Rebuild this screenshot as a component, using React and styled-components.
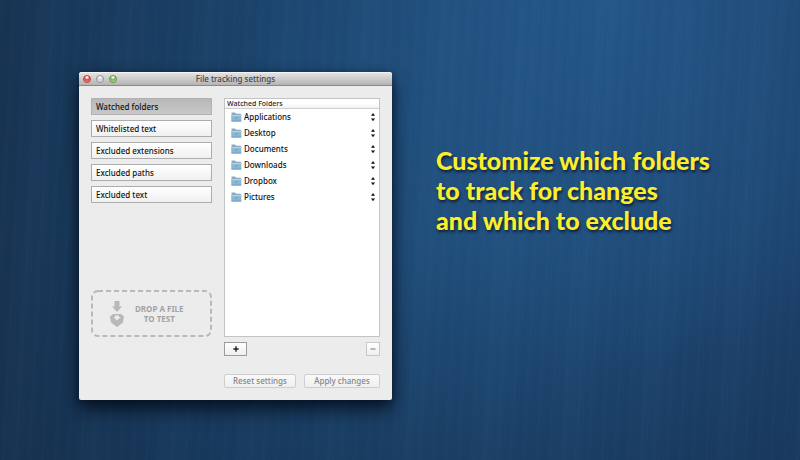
import React, { useState } from "react";
import styled, { createGlobalStyle } from "styled-components";

const GlobalStyle = createGlobalStyle`
  *, *::before, *::after { box-sizing: border-box; }
  body { margin: 0; background: #1b4169; }
  body, button, input { font-family: "Noto Sans", "Open Sans", sans-serif; }
`;

const Stage = styled.main`
  min-height: 100vh;
  padding: 72px 79px 60px;
  display: grid;
  grid-template-columns: 313fr 285fr;
  column-gap: 44px;
  align-items: start;
  background:
    repeating-linear-gradient(93deg, rgba(120, 170, 230, 0.015) 0 2px, transparent 3px 7px, rgba(0, 10, 40, 0.025) 8px 9px, transparent 10px 13px),
    repeating-linear-gradient(95deg, transparent 0 31px, rgba(110, 170, 220, 0.025) 50px, transparent 79px),
    radial-gradient(ellipse 50% 80% at 76% 0%, rgba(40, 96, 150, 0.65), transparent),
    radial-gradient(ellipse 45% 60% at 62% 50%, rgba(34, 84, 130, 0.5), transparent),
    linear-gradient(transparent 50%, rgba(18, 40, 66, 0.3)),
    linear-gradient(90deg, #183453 0%, #1a4066 25%, #1d4670 60%, #1c406a 100%);

  @media (max-width: 640px) {
    grid-template-columns: 1fr;
    row-gap: 40px;
    padding: 32px 24px;
  }
`;

const Window = styled.section`
  border-radius: 3px 3px 2px 2px;
  background: #ececec;
  box-shadow: 0 10px 18px rgba(0, 8, 20, 0.7), 0 2px 8px rgba(0, 8, 20, 0.4);
`;

const TitleBar = styled.header`
  height: 14px;
  padding: 0 4px;
  display: grid;
  grid-template-columns: 1fr auto 1fr;
  align-items: center;
  border-radius: 3px 3px 0 0;
  border-bottom: 1px solid #8a8a8a;
  background: linear-gradient(#e6e6e6, #b4b4b4);
  box-shadow: inset 0 1px 0 #f4f4f4;
`;

const Title = styled.h1`
  margin: 0;
  font-size: 8px;
  line-height: 12px;
  font-weight: 500;
  color: #444;
`;

const Lights = styled.div`
  display: flex;
  gap: 5px;
`;

const Light = styled.button`
  width: 8px;
  height: 8px;
  padding: 0;
  border: 1px solid ${(p) => p.$rim};
  border-radius: 50%;
  background: radial-gradient(circle at 50% 20%, #fff 0 10%, ${(p) => p.$fill} 45%, ${(p) => p.$glow});
`;

const Body = styled.div`
  padding: 12px;
  display: grid;
  grid-template-columns: 121fr 156fr;
  column-gap: 12px;
`;

const Sidebar = styled.div`
  display: flex;
  flex-direction: column;
  justify-content: space-between;
  padding-bottom: 51px;
`;

const Nav = styled.nav`
  display: grid;
  gap: 5px;
`;

const NavButton = styled.button`
  height: 17px;
  padding: 0 4px;
  border: 1px solid ${(p) => (p.$active ? "#b2b2b2" : "#adadad")};
  background: ${(p) =>
    p.$active ? "linear-gradient(#b8b8b8, #c8c8c8)" : "linear-gradient(#fff, #f0f0f0)"};
  text-align: left;
  font-size: 8px;
  line-height: 15px;
  font-weight: 500;
  color: #111;
`;

const DropZone = styled.label`
  position: relative;
  height: 47px;
  padding-left: 19px;
  display: flex;
  align-items: center;
  gap: 11px;
  color: #a3a3a3;
  font-size: 8px;
  line-height: 10px;
  font-weight: 700;
  text-align: center;
`;

const DashedOutline = styled.svg`
  position: absolute;
  inset: 0;
  width: 100%;
  height: 100%;

  rect {
    x: 1px;
    y: 1px;
    width: calc(100% - 2px);
    height: calc(100% - 2px);
  }
`;

const FileInput = styled.input`
  position: absolute;
  width: 1px;
  height: 1px;
  opacity: 0;
`;

const Panel = styled.div`
  display: flex;
  flex-direction: column;
`;

const FolderBox = styled.div`
  min-height: 239px;
  border: 1px solid #c4c4c4;
  background: #fff;
`;

const BoxHeading = styled.h2`
  margin: 0;
  height: 10px;
  padding: 0 2px;
  border-bottom: 1px solid #d0d0d0;
  background: linear-gradient(#fff 50%, #f1f1f1);
  font-size: 7px;
  line-height: 9px;
  font-weight: 500;
  color: #222;
`;

const FolderList = styled.ul`
  margin: 0;
  padding: 0;
  list-style: none;
`;

const FolderRow = styled.li`
  height: 16px;
  padding: 0 3px 0 6px;
  display: flex;
  align-items: center;
  gap: 2px;
  font-size: 8px;
  line-height: 16px;
  font-weight: 500;
  color: #111;
`;

const FolderName = styled.span`
  flex: 1;
`;

const MoveButton = styled.button`
  display: flex;
  padding: 0;
  border: 0;
  background: none;
`;

const Toolbar = styled.div`
  margin-top: 5px;
  display: flex;
  justify-content: space-between;
`;

const SquareButton = styled.button`
  width: ${(p) => (p.$wide ? 23 : 14)}px;
  height: 14px;
  padding: 0;
  display: grid;
  place-items: center;
  border: 1px solid ${(p) => (p.disabled ? "#c8c8c8" : "#9c9c9c")};
  background: linear-gradient(#fff, #efefef);
  color: ${(p) => (p.disabled ? "#8c8c8c" : "#222")};
`;

const Actions = styled.div`
  margin-top: 18px;
  display: grid;
  grid-template-columns: 72fr 76fr;
  column-gap: 8px;
`;

const ActionButton = styled.button`
  height: 14px;
  padding: 0;
  border: 1px solid #cecece;
  border-radius: 2px;
  background: linear-gradient(#f9f9f9, #f0f0f0);
  font-size: 8px;
  line-height: 12px;
  font-weight: 500;
  color: #858585;
`;

const Headline = styled.p`
  margin: 73px 0 0;
  font-family: Lato, "Open Sans", sans-serif;
  font-size: 25px;
  line-height: 30px;
  font-weight: 900;
  color: #fbee2e;
  text-shadow: 1px 2px 3px rgba(0, 10, 30, 0.75);
`;

const Line = styled.span`
  display: block;
`;

const FolderIcon = () => (
  <svg width="11" height="10" viewBox="0 0 11 10" aria-hidden="true">
    <path d="M.5 9.200V1.200Q.5.500 1.200.500H4l1 1.200h4.600q.6 0 .6.600v6.900z" fill="#86abc2" />
    <path d="M.5 3h9.700v6.200H.5z" fill="#8fb9d3" />
    <path d="M.5 3h9.700v1H.5z" fill="#b5d5e8" />
    <path d="M.5 8.600h9.700v.9H.5z" fill="#6695b4" />
    <path d="M4 5.200h3v2H4z" fill="#80acc8" />
  </svg>
);

const MoveIcon = () => (
  <svg width="6" height="10" viewBox="0 0 6 10" fill="#111" aria-hidden="true">
    <path d="M1 3.700 3 1l2 2.700zM1 6.500h4L3 9.200z" />
  </svg>
);

const InboxIcon = () => (
  <svg width="14" height="28" viewBox="0 0 14 28" fill="#b8b8b8" aria-hidden="true">
    <path d="M4.500 1h5v5.500H12L7 12 2 6.500h2.500z" />
    <path
      fillRule="evenodd"
      d="M3 14h8l3 2.500-1 6L7 27 1 22.500l-1-6zM5 15.500V17H3.500L7 20.500l3.500-3.500H9v-1.500z"
    />
  </svg>
);

const PlusIcon = () => (
  <svg width="6" height="6" viewBox="0 0 6 6" aria-hidden="true">
    <path d="M3 .3v5.400M.3 3h5.400" stroke="currentColor" strokeWidth="1.400" />
  </svg>
);

const MinusIcon = () => (
  <svg width="6" height="6" viewBox="0 0 6 6" aria-hidden="true">
    <path d="M.5 3h5" stroke="currentColor" strokeWidth="1.200" />
  </svg>
);

const sections = [
  "Watched folders",
  "Whitelisted text",
  "Excluded extensions",
  "Excluded paths",
  "Excluded text",
];

const folders = ["Applications", "Desktop", "Documents", "Downloads", "Dropbox", "Pictures"];

export default function App() {
  const [active, setActive] = useState(sections[0]);

  return (
    <>
      <GlobalStyle />
      <Stage>
        <Window aria-label="File tracking settings">
          <TitleBar>
            <Lights>
              <Light aria-label="Close" $rim="#b64640" $fill="#e6453f" $glow="#ff9a90" />
              <Light aria-label="Minimize" $rim="#949494" $fill="#cfcfcf" $glow="#eeeeee" />
              <Light aria-label="Zoom" $rim="#64964a" $fill="#72b94c" $glow="#c5f29a" />
            </Lights>
            <Title>File tracking settings</Title>
          </TitleBar>
          <Body>
            <Sidebar>
              <Nav aria-label="Sections">
                {sections.map((name) => (
                  <NavButton
                    key={name}
                    type="button"
                    $active={name === active}
                    aria-pressed={name === active}
                    onClick={() => setActive(name)}
                  >
                    {name}
                  </NavButton>
                ))}
              </Nav>
              <DropZone>
                <DashedOutline aria-hidden="true">
                  <rect rx="6" fill="none" stroke="#b9b9b9" strokeWidth="2" strokeDasharray="5 3" />
                </DashedOutline>
                <InboxIcon />
                <span>
                  DROP A FILE
                  <br />
                  TO TEST
                </span>
                <FileInput type="file" />
              </DropZone>
            </Sidebar>
            <Panel>
              <FolderBox>
                <BoxHeading>Watched Folders</BoxHeading>
                <FolderList>
                  {folders.map((name) => (
                    <FolderRow key={name}>
                      <FolderIcon />
                      <FolderName>{name}</FolderName>
                      <MoveButton type="button" aria-label={`Move ${name}`}>
                        <MoveIcon />
                      </MoveButton>
                    </FolderRow>
                  ))}
                </FolderList>
              </FolderBox>
              <Toolbar>
                <SquareButton type="button" $wide aria-label="Add folder">
                  <PlusIcon />
                </SquareButton>
                <SquareButton type="button" disabled aria-label="Remove folder">
                  <MinusIcon />
                </SquareButton>
              </Toolbar>
              <Actions>
                <ActionButton type="button" disabled>Reset settings</ActionButton>
                <ActionButton type="button" disabled>Apply changes</ActionButton>
              </Actions>
            </Panel>
          </Body>
        </Window>
        <Headline>
          <Line>Customize which folders</Line>
          <Line>to track for changes</Line>
          <Line>and which to exclude</Line>
        </Headline>
      </Stage>
    </>
  );
}
